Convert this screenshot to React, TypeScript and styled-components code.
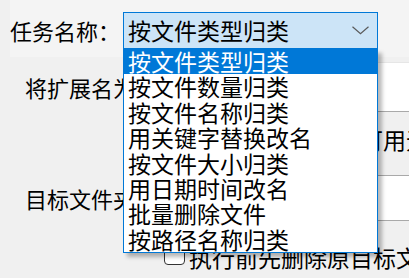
import { createGlobalStyle } from 'styled-components';
import styled from 'styled-components';

const GlobalStyle = createGlobalStyle`
  html, body {
    margin: 0;
    padding: 0;
    background: #f0f0f0;
  }
  body {
    font-family: "Noto Sans CJK SC", "Noto Sans", sans-serif;
    color: #000;
  }
`;

const tasks = [
  '按文件类型归类',
  '按文件数量归类',
  '按文件名称归类',
  '用关键字替换改名',
  '按文件大小归类',
  '用日期时间改名',
  '批量删除文件',
  '按路径名称归类',
];

const Window = styled.div`
  width: 409px;
  height: 278px;
  overflow: hidden;
  position: relative;
  display: flex;
  flex-direction: column;
  background: #f0f0f0;
`;

const TaskBar = styled.div`
  height: 57px;
  box-sizing: border-box;
  margin-left: 10px;
  padding-top: 12px;
  display: flex;
  align-items: flex-start;
  background: #f4f4f4;
`;

const TaskLabel = styled.span`
  font-size: 22px;
  line-height: 37px;
  width: 113px;
  white-space: nowrap;
`;

const ComboWrap = styled.div`
  position: relative;
  width: 255px;
  z-index: 5;
`;

const Combo = styled.div`
  height: 37px;
  box-sizing: border-box;
  border: 1px solid #0078d7;
  background: #cce4f7;
  display: flex;
  align-items: center;
  justify-content: space-between;
  padding: 0 8px 0 4px;
  font-size: 23px;
  line-height: 37px;
`;

const Chevron = () => (
  <svg width="17" height="9" viewBox="0 0 17 9">
    <polyline points="0.5,0.8 8.5,7.8 16.5,0.8" fill="none" stroke="#5a5a5a" strokeWidth="1.2" />
  </svg>
);

const List = styled.ul`
  position: absolute;
  top: 100%;
  left: 0;
  width: 100%;
  box-sizing: border-box;
  margin: 0;
  padding: 0;
  list-style: none;
  background: #fff;
  border: 1px solid #0078d7;
  border-top: none;
  box-shadow: 4px 4px 4px rgba(0, 0, 0, 0.28);
`;

const Item = styled.li<{ $active?: boolean }>`
  height: 25.4px;
  padding-left: 4px;
  font-size: 23px;
  line-height: 25px;
  white-space: nowrap;
  background: ${(p) => (p.$active ? '#0078d7' : '#fff')};
  color: ${(p) => (p.$active ? '#fff' : '#000')};
`;

const Form = styled.div`
  display: flex;
  flex-direction: column;
`;

const FieldRow = styled.div<{ $height: number; $top?: number }>`
  display: flex;
  align-items: center;
  height: ${(p) => p.$height}px;
  margin-top: ${(p) => p.$top || 0}px;
  padding-left: 25px;
`;

const FieldLabel = styled.span`
  font-size: 22px;
  line-height: 25px;
  width: 175px;
  white-space: nowrap;
`;

const TextBox = styled.div<{ $softTop?: boolean }>`
  flex: 1;
  align-self: stretch;
  background: #fff;
  border: 1px solid #a9a9a9;
  border-top-color: ${(p) => (p.$softTop ? '#e6e6e6' : '#a9a9a9')};
  border-right: none;
`;

const CheckRow = styled.div<{ $height: number; $indent: number; $pad: number }>`
  display: flex;
  align-items: flex-start;
  gap: 4px;
  height: ${(p) => p.$height}px;
  box-sizing: border-box;
  padding-top: ${(p) => p.$pad}px;
  padding-left: ${(p) => p.$indent}px;
  white-space: nowrap;
`;

const CheckBox = styled.span`
  flex: none;
  width: 21px;
  height: 20px;
  box-sizing: border-box;
  border: 1.5px solid #333;
  border-radius: 4px;
  background: #fff;
`;

const CheckText = styled.span`
  font-size: 23px;
  line-height: 25px;
`;

export default function App() {
  return (
    <>
      <GlobalStyle />
      <Window>
        <TaskBar>
          <TaskLabel>任务名称：</TaskLabel>
          <ComboWrap>
            <Combo>
              <span>{tasks[0]}</span>
              <Chevron />
            </Combo>
            <List>
              {tasks.map((t, i) => (
                <Item key={t} $active={i === 0}>
                  {t}
                </Item>
              ))}
            </List>
          </ComboWrap>
        </TaskBar>
        <Form>
          <FieldRow $height={50} $top={5}>
            <FieldLabel>将扩展名为：</FieldLabel>
            <TextBox $softTop />
          </FieldRow>
          <CheckRow $height={63} $indent={335} $pad={15}>
            <CheckBox />
            <CheckText>可用无扩展名</CheckText>
          </CheckRow>
          <FieldRow $height={46}>
            <FieldLabel>目标文件夹：</FieldLabel>
            <TextBox />
          </FieldRow>
          <CheckRow $height={57} $indent={164} $pad={24}>
            <CheckBox />
            <CheckText>执行前先删除原目标文件夹</CheckText>
          </CheckRow>
        </Form>
      </Window>
    </>
  );
}
